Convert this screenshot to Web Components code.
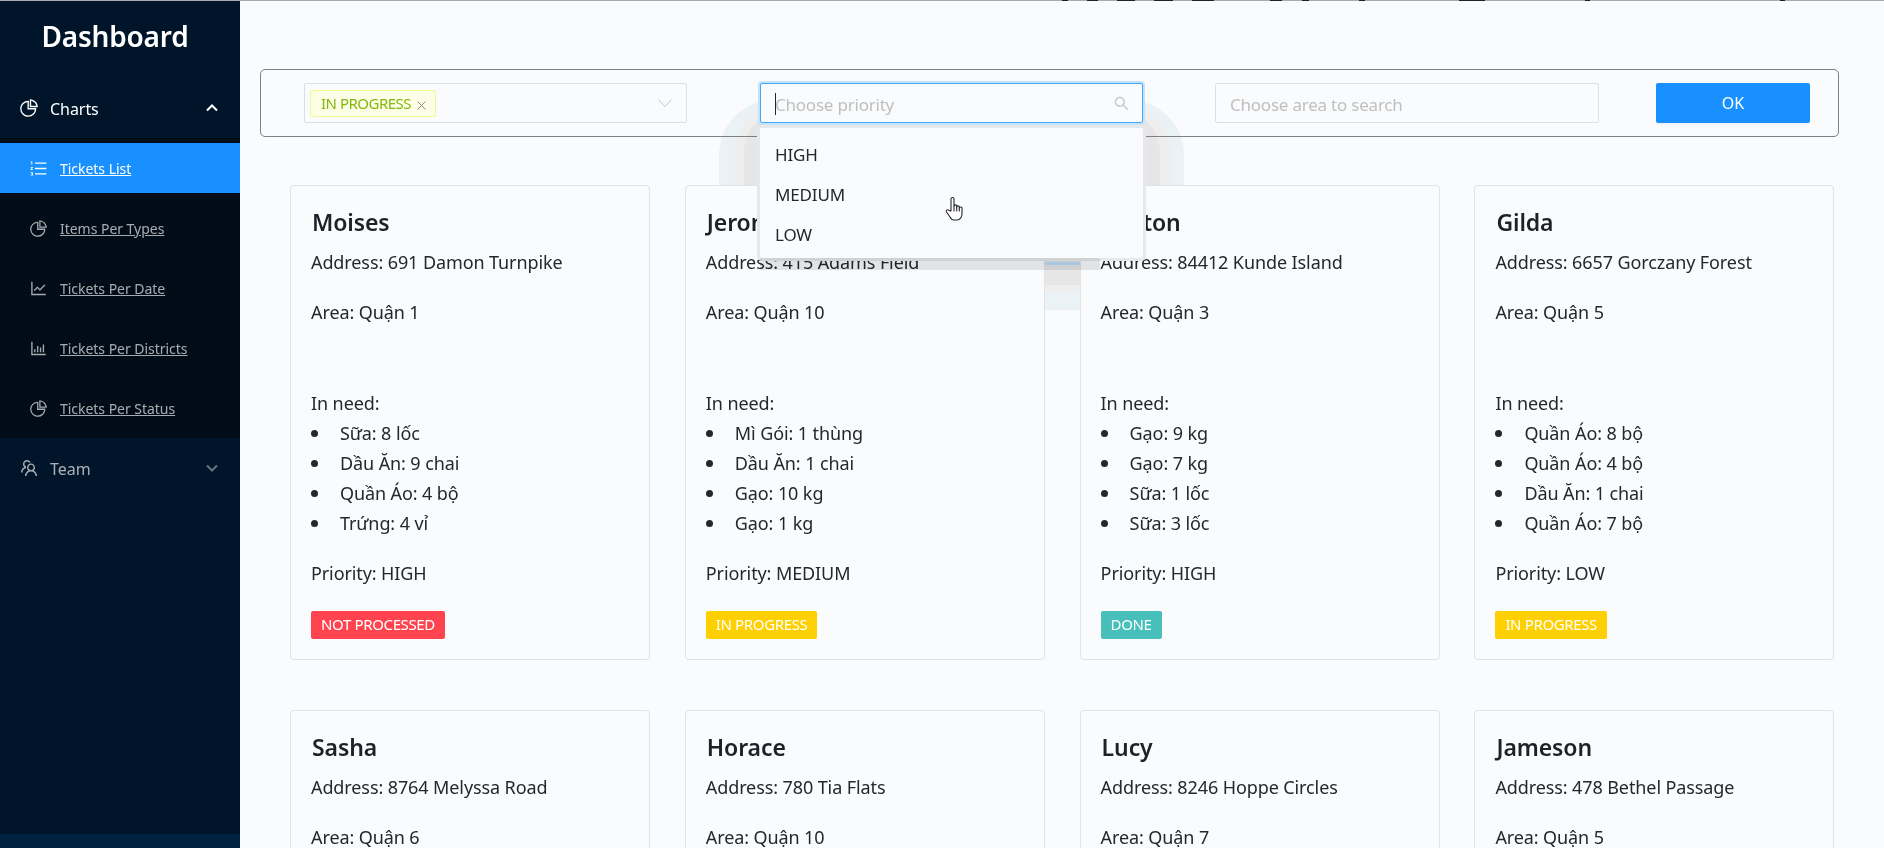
<!DOCTYPE html>
<html lang="vi">
<head>
<meta charset="utf-8">
<title>Dashboard</title>
<style>
  html, body { margin: 0; height: 100%; overflow: hidden; background: #fafbfd; }
  body { font-family: "Noto Sans", "Open Sans", sans-serif; color: #23272e; }
</style>
</head>
<body>
<app-shell>
  <side-nav slot="nav" heading="Dashboard">
    <nav-group label="Charts" icon="pie" open>
      <nav-item label="Tickets List" icon="list" active></nav-item>
      <nav-item label="Items Per Types" icon="pie"></nav-item>
      <nav-item label="Tickets Per Date" icon="line"></nav-item>
      <nav-item label="Tickets Per Districts" icon="bar"></nav-item>
      <nav-item label="Tickets Per Status" icon="pie"></nav-item>
    </nav-group>
    <nav-group label="Team" icon="team"></nav-group>
  </side-nav>

  <filter-bar>
    <tag-select value="IN PROGRESS"></tag-select>
    <search-select placeholder="Choose priority" options="HIGH|MEDIUM|LOW" open></search-select>
    <search-select placeholder="Choose area to search" wide></search-select>
    <ok-button>OK</ok-button>
  </filter-bar>

  <ticket-grid>
    <ticket-card name="Moises" address="691 Damon Turnpike" area="Quận 1" items="Sữa: 8 lốc|Dầu Ăn: 9 chai|Quần Áo: 4 bộ|Trứng: 4 vỉ" priority="HIGH" status="NOT PROCESSED"></ticket-card>
    <ticket-card name="Jerome" address="415 Adams Field" area="Quận 10" items="Mì Gói: 1 thùng|Dầu Ăn: 1 chai|Gạo: 10 kg|Gạo: 1 kg" priority="MEDIUM" status="IN PROGRESS"></ticket-card>
    <ticket-card name="Ashton" address="84412 Kunde Island" area="Quận 3" items="Gạo: 9 kg|Gạo: 7 kg|Sữa: 1 lốc|Sữa: 3 lốc" priority="HIGH" status="DONE"></ticket-card>
    <ticket-card name="Gilda" address="6657 Gorczany Forest" area="Quận 5" items="Quần Áo: 8 bộ|Quần Áo: 4 bộ|Dầu Ăn: 1 chai|Quần Áo: 7 bộ" priority="LOW" status="IN PROGRESS"></ticket-card>
    <ticket-card name="Sasha" address="8764 Melyssa Road" area="Quận 6"></ticket-card>
    <ticket-card name="Horace" address="780 Tia Flats" area="Quận 10"></ticket-card>
    <ticket-card name="Lucy" address="8246 Hoppe Circles" area="Quận 7"></ticket-card>
    <ticket-card name="Jameson" address="478 Bethel Passage" area="Quận 5"></ticket-card>
  </ticket-grid>

  <hand-cursor slot="overlay"></hand-cursor>
</app-shell>

<script>
const ICONS = {
  pie: 'M864 518H506V160c0-4.4-3.6-8-8-8h-26a398.46 398.46 0 0 0-282.8 117.1 398.19 398.19 0 0 0-85.7 127.1A397.61 397.61 0 0 0 72 552a398.46 398.46 0 0 0 117.1 282.8c36.7 36.7 79.5 65.6 127.1 85.7A397.61 397.61 0 0 0 472 952a398.46 398.46 0 0 0 282.8-117.1c36.7-36.7 65.6-79.5 85.7-127.1A397.61 397.61 0 0 0 872 552v-26c0-4.4-3.6-8-8-8zM705.7 787.8A331.59 331.59 0 0 1 470.4 884c-88.1-.4-170.9-34.9-233.2-97.2C174.5 724.1 140 640.7 140 552c0-88.7 34.5-172.1 97.2-234.8 54.6-54.6 124.9-87.9 200.8-95.5V586h364.3c-7.7 76.3-41.3 147-96.6 201.8zM952 462.4l-2.6-28.2c-8.5-92.1-49.4-179-115.2-244.6A399.4 399.4 0 0 0 589 74.6L560.7 72c-4.7-.4-8.7 3.2-8.7 7.9V464c0 4.4 3.6 8 8 8l384-1c4.7 0 8.4-4 8-8.6zm-332.2-58.2V147.6a332.24 332.24 0 0 1 166.4 89.8c45.7 45.6 77 103.6 90 166.1l-256.4.7z',
  list: 'M920 760H336c-4.4 0-8 3.6-8 8v56c0 4.4 3.6 8 8 8h584c4.4 0 8-3.6 8-8v-56c0-4.4-3.6-8-8-8zm0-568H336c-4.4 0-8 3.6-8 8v56c0 4.4 3.6 8 8 8h584c4.4 0 8-3.6 8-8v-56c0-4.4-3.6-8-8-8zm0 284H336c-4.4 0-8 3.6-8 8v56c0 4.4 3.6 8 8 8h584c4.4 0 8-3.6 8-8v-56c0-4.4-3.6-8-8-8zM216 712H100c-2.2 0-4 1.8-4 4v34c0 2.2 1.8 4 4 4h72.4v20.5h-35.7c-2.2 0-4 1.8-4 4v34c0 2.2 1.8 4 4 4h35.7V838H100c-2.2 0-4 1.8-4 4v34c0 2.2 1.8 4 4 4h116c2.2 0 4-1.8 4-4V716c0-2.2-1.8-4-4-4zM100 188h38v120c0 2.2 1.8 4 4 4h40c2.2 0 4-1.8 4-4V152c0-4.4-3.6-8-8-8h-78c-2.2 0-4 1.8-4 4v36c0 2.2 1.8 4 4 4zm116 240H100c-2.2 0-4 1.8-4 4v36c0 2.2 1.8 4 4 4h68.4l-70.3 77.7a8.3 8.3 0 0 0-2.1 5.4V592c0 2.2 1.8 4 4 4h116c2.2 0 4-1.8 4-4v-36c0-2.2-1.8-4-4-4h-68.4l70.3-77.7a8.3 8.3 0 0 0 2.1-5.4V432c0-2.2-1.8-4-4-4z',
  line: 'M888 792H200V168c0-4.4-3.6-8-8-8h-56c-4.4 0-8 3.6-8 8v688c0 4.4 3.6 8 8 8h752c4.4 0 8-3.6 8-8v-56c0-4.4-3.6-8-8-8zM305.8 637.7c3.1 3.1 8.1 3.1 11.3 0l138.3-137.6L583 628.5c3.1 3.1 8.2 3.1 11.3 0l275.4-275.3c3.1-3.1 3.1-8.2 0-11.3l-39.6-39.6a8.03 8.03 0 0 0-11.3 0l-230 229.9L461.4 404a8.03 8.03 0 0 0-11.3 0L266.3 586.7a8.03 8.03 0 0 0 0 11.3l39.5 39.7z',
  bar: 'M888 792H200V168c0-4.4-3.6-8-8-8h-56c-4.4 0-8 3.6-8 8v688c0 4.4 3.6 8 8 8h752c4.4 0 8-3.6 8-8v-56c0-4.4-3.6-8-8-8zm-600-80h56c4.4 0 8-3.6 8-8V560c0-4.4-3.6-8-8-8h-56c-4.4 0-8 3.6-8 8v144c0 4.4 3.6 8 8 8zm152 0h56c4.4 0 8-3.6 8-8V384c0-4.4-3.6-8-8-8h-56c-4.4 0-8 3.6-8 8v320c0 4.4 3.6 8 8 8zm152 0h56c4.4 0 8-3.6 8-8V462c0-4.4-3.6-8-8-8h-56c-4.4 0-8 3.6-8 8v242c0 4.4 3.6 8 8 8zm152 0h56c4.4 0 8-3.6 8-8V304c0-4.4-3.6-8-8-8h-56c-4.4 0-8 3.6-8 8v400c0 4.4 3.6 8 8 8z',
  team: 'M824.2 699.9a301.55 301.55 0 0 0-86.4-60.4C783.1 602.8 812 546.8 812 484c0-110.8-92.4-201.7-203.2-200-109.1 1.7-197 90.6-197 200 0 62.8 29 118.8 74.2 155.5a300.95 300.95 0 0 0-86.4 60.4C345 754.6 314 826.8 312 903.8a8 8 0 0 0 8 8.2h56c4.3 0 7.9-3.4 8-7.7 1.9-58 25.4-112.3 66.7-153.5A226.62 226.62 0 0 1 612 684c60.9 0 118.2 23.7 161.3 66.8C814.5 792 838 846.3 840 904.3c.1 4.3 3.7 7.7 8 7.7h56a8 8 0 0 0 8-8.2c-2-77-33-149.2-87.8-203.9zM612 612c-34.2 0-66.4-13.3-90.5-37.5a126.86 126.86 0 0 1-37.5-91.8c.3-32.8 13.4-64.5 36.3-88 24-24.6 56.1-38.3 90.4-38.7 33.9-.3 66.8 12.9 91 36.6 24.8 24.3 38.4 56.8 38.4 91.4 0 34.2-13.3 66.3-37.5 90.5A127.3 127.3 0 0 1 612 612zM361.5 510.4c-.9-8.7-1.4-17.5-1.4-26.4 0-15.9 1.5-31.4 4.3-46.5.7-3.6-1.2-7.3-4.5-8.8-13.6-6.1-26.1-14.5-36.9-25.1a127.54 127.54 0 0 1-38.7-95.4c.9-32.1 13.8-62.6 36.3-85.6 24.7-25.3 57.9-39.1 93.2-38.7 31.9.3 62.7 12.6 86 34.4 7.9 7.4 14.7 15.6 20.4 24.4 2 3.1 5.9 4.4 9.3 3.2 17.6-6.1 36.2-10.4 55.3-12.4 5.6-.6 8.8-6.6 6.3-11.6-32.5-64.3-98.9-108.7-175.7-109.9-110.9-1.7-203.3 89.2-203.3 199.9 0 62.8 28.9 118.8 74.2 155.5-31.8 14.7-61.1 35-86.5 60.4-54.8 54.7-85.8 126.9-87.8 204a8 8 0 0 0 8 8.2h56.1c4.3 0 7.9-3.4 8-7.7 1.9-58 25.4-112.3 66.7-153.5 29.4-29.4 65.4-49.8 104.7-59.7 3.9-1 6.5-4.7 6-8.7z',
  search: 'M909.6 854.5L649.9 594.8C690.2 542.7 712 479 712 412c0-80.2-31.3-155.4-87.9-212.1-56.6-56.7-132-87.9-212.1-87.9s-155.5 31.3-212.1 87.9C143.2 256.5 112 331.8 112 412c0 80.1 31.3 155.5 87.9 212.1C256.5 680.8 331.8 712 412 712c67 0 130.6-21.8 182.7-62l259.7 259.6a8.2 8.2 0 0 0 11.6 0l43.6-43.5a8.2 8.2 0 0 0 0-11.6zM570.4 570.4C528 612.7 471.8 636 412 636s-116-23.3-158.4-65.6C211.3 528 188 471.8 188 412s23.3-116.1 65.6-158.4C296 211.3 352.2 188 412 188s116.1 23.2 158.4 65.6S636 352.2 636 412s-23.3 116.1-65.6 158.4z'
};

const icon = (name, size) =>
  `<svg width="${ size }" height="${ size }" viewBox="64 64 896 896" fill="currentColor" aria-hidden="true"><path d="${ ICONS[name] }"/></svg>`;

const STATUS_COLORS = {
  'NOT PROCESSED': '#ff444f',
  'IN PROGRESS': '#ffd000',
  'DONE': '#47bfbb'
};

class AppShell extends HTMLElement {
  connectedCallback() {
    const shadow = this.attachShadow({ mode: 'open' });
    shadow.innerHTML = `
      <style>
        :host { display: flex; height: 100vh; position: relative; overflow: hidden; }
        .topline {
          position: absolute; top: 0; left: 0; right: 0; height: 1px; z-index: 9;
          background: linear-gradient(90deg,
            #aaa 1062px, #222 1062px 1068px, #aaa 1068px 1087px, #222 1087px 1098px, #aaa 1098px 1117px,
            #222 1117px 1135px, #aaa 1135px 1154px, #222 1154px 1173px, #aaa 1173px 1192px, #222 1192px 1214px,
            #aaa 1214px 1270px, #222 1270px 1282px, #aaa 1282px 1302px, #222 1302px 1309px, #aaa 1309px 1359px,
            #222 1359px 1365px, #aaa 1365px 1459px, #222 1459px 1485px, #aaa 1485px 1585px, #222 1585px 1590px,
            #aaa 1590px 1780px, #222 1780px 1785px, #aaa 1785px);
        }
        main { flex: 1; min-width: 0; position: relative; padding: 69px 45px 0 20px; }
        /* ghost of the page's loader, it sits behind the cards */
        .ghost {
          position: absolute; left: 479px; top: 100px; width: 465px; height: 210px; box-sizing: border-box;
          background: #eaf2f6; border-radius: 55px 55px 0 0;
        }
        .ghost::before {
          content: ''; position: absolute; inset: 5px 14px 17px 16px;
          background: #eeeeee; border-radius: 48px 48px 0 0;
        }
        .ghost::after {
          content: ''; position: absolute; inset: 10px 24px 25px 25px;
          background: #e6e6e6; border-radius: 42px 42px 0 0;
        }
        .blue {
          position: absolute; left: 519px; top: 153px; width: 385px; height: 112px; box-sizing: border-box;
          border: 1px solid #bcdcf7; border-width: 1px 1px 3px; z-index: 0;
        }
        .content { position: relative; z-index: 1; }
        /* the same ghost, left over on top of the cards under the dropdown */
        .strip {
          position: absolute; left: 760px; top: 258px; width: 340px; height: 12px; z-index: 3;
          background: #e6e7e8; mix-blend-mode: multiply; pointer-events: none;
        }
      </style>
      <div class="topline"></div>
      <slot name="nav"></slot>
      <main>
        <div class="ghost"></div>
        <div class="blue"></div>
        <div class="content"><slot></slot></div>
      </main>
      <div class="strip"></div>
      <slot name="overlay"></slot>
    `;
  }
}

class SideNav extends HTMLElement {
  connectedCallback() {
    const shadow = this.attachShadow({ mode: 'open' });
    shadow.innerHTML = `
      <style>
        :host { display: flex; flex-direction: column; flex: 0 0 240px; width: 240px; background: #001529; }
        h1 {
          margin: 0 0 6px; height: 72px; line-height: 72px; padding-right: 10px; text-align: center;
          color: #fff; font-size: 28px; font-weight: 600; letter-spacing: -.2px;
        }
        .menu { flex: 1; }
        .trigger { height: 14px; background: #002140; }
      </style>
      <h1>${ this.getAttribute('heading') }</h1>
      <div class="menu"><slot></slot></div>
      <div class="trigger"></div>
    `;
  }
}

class NavGroup extends HTMLElement {
  connectedCallback() {
    const open = this.hasAttribute('open');
    const shadow = this.attachShadow({ mode: 'open' });
    shadow.innerHTML = `
      <style>
        :host { display: block; }
        .title {
          display: flex; align-items: center; height: 50px; margin: 5px 0; padding: 0 22px 0 20px;
          font-size: 16px; letter-spacing: -.05px; color: ${ open ? '#fff' : 'rgba(255,255,255,.65)' };
        }
        .title svg:first-child { margin-right: 12px; flex: none; }
        .label { flex: 1; padding-top: 1px; }
        .chev { color: ${ open ? '#fff' : 'rgba(255,255,255,.4)' }; flex: none; }
        .sub { background: #000c17; padding: 5px 0; }
      </style>
      <div class="title">
        ${ icon(this.getAttribute('icon'), 18) }
        <span class="label">${ this.getAttribute('label') }</span>
        <svg class="chev" width="12" height="8" viewBox="0 0 12 8" fill="none" stroke="currentColor" stroke-width="2">
          <path d="${ open ? 'M1 6.5 6 1.5l5 5' : 'M1 1.5l5 5 5-5' }"/>
        </svg>
      </div>
      ${ open ? '<div class="sub"><slot></slot></div>' : '' }
    `;
  }
}

class NavItem extends HTMLElement {
  connectedCallback() {
    const active = this.hasAttribute('active');
    const shadow = this.attachShadow({ mode: 'open' });
    shadow.innerHTML = `
      <style>
        :host {
          display: flex; align-items: center; height: 50px; padding-left: 30px;
          background: ${ active ? '#1890ff' : 'transparent' };
          color: ${ active ? '#fff' : 'rgba(255,255,255,.65)' };
          font-size: 14px; letter-spacing: -.03px;
        }
        :host(:not(:last-child)) { margin-bottom: 10px; }
        svg { margin-right: 13px; flex: none; }
        a { color: inherit; text-decoration: underline; }
      </style>
      ${ icon(this.getAttribute('icon'), 17) }
      <a href="#">${ this.getAttribute('label') }</a>
    `;
  }
}

class FilterBar extends HTMLElement {
  connectedCallback() {
    const shadow = this.attachShadow({ mode: 'open' });
    shadow.innerHTML = `
      <style>
        :host {
          display: grid; grid-template-columns: 456px 455px 441px 154px; align-items: start;
          height: 68px; box-sizing: border-box; padding: 13px 0 13px 43px;
          border: 1px solid #808080; border-radius: 5px;
          position: relative; z-index: 2;
        }
      </style>
      <slot></slot>
    `;
  }
}

class TagSelect extends HTMLElement {
  connectedCallback() {
    const shadow = this.attachShadow({ mode: 'open' });
    shadow.innerHTML = `
      <style>
        :host {
          display: flex; align-items: center; justify-content: space-between;
          width: 383px; height: 40px; box-sizing: border-box; padding: 0 14px 0 5px;
          border: 1px solid #d9dfe7; border-radius: 2px; background: #fafbfd;
        }
        .tag {
          display: flex; align-items: center; height: 27px; box-sizing: border-box; padding: 0 9px 0 10px;
          background: #fcffe6; border: 1px solid #eef98f; border-radius: 2px;
          color: #85b80f; font-size: 15px; letter-spacing: -.5px;
        }
        .tag svg { margin: 5px 0 0 6px; }
      </style>
      <span class="tag">${ this.getAttribute('value') }
        <svg width="9" height="9" viewBox="0 0 9 9" fill="none" stroke="#8c8c8c" stroke-width="1"><path d="M.5.5l8 8M8.5.5l-8 8"/></svg>
      </span>
      <svg width="14" height="8" viewBox="0 0 14 8" fill="none" stroke="#c4c8cc" stroke-width="1"><path d="M.5.5 7 7.5 13.5.5"/></svg>
    `;
  }
}

class SearchSelect extends HTMLElement {
  connectedCallback() {
    const open = this.hasAttribute('open');
    const options = (this.getAttribute('options') || '').split('|').filter(Boolean);
    const shadow = this.attachShadow({ mode: 'open' });
    shadow.innerHTML = `
      <style>
        :host { display: block; position: relative; width: ${ this.hasAttribute('wide') ? 384 : 383 }px; }
        .box {
          display: flex; align-items: center; height: 40px; box-sizing: border-box; padding: 0 13px 0 14px;
          background: #fafbfd; border-radius: 2px; position: relative;
          border: 1px solid ${ open ? '#40a9ff' : '#dcdfe4' };
          ${ open ? 'box-shadow: 0 0 0 2px #c5e3fb;' : '' }
          color: #bfbfbf; font-size: 17px; letter-spacing: -.22px;
        }
        .box span { flex: 1; padding-top: 2px; }
        .box i { position: absolute; left: 14px; top: 9px; width: 1px; height: 22px; background: #23272e; }
        .box svg { color: #c4c4c4; flex: none; }
        ul {
          position: absolute; left: 0; right: 0; top: 45px; height: 130px; box-sizing: border-box;
          margin: 0; padding: 7px 0 3px; list-style: none; background: #fafbfd; border-radius: 2px;
          box-shadow: 0 0 0 3px #e6e9ec; z-index: 2;
        }
        li { height: 40px; line-height: 40px; padding-left: 15px; font-size: 17px; letter-spacing: -.16px; color: #23272e; }
      </style>
      <div class="box">
        ${ open ? '<i></i>' : '' }
        <span>${ this.getAttribute('placeholder') }</span>
        ${ open ? icon('search', 15) : '' }
      </div>
      ${ open ? `<ul>${ options.map((o) => `<li>${ o }</li>`).join('') }</ul>` : '' }
    `;
  }
}

class OkButton extends HTMLElement {
  connectedCallback() {
    const shadow = this.attachShadow({ mode: 'open' });
    shadow.innerHTML = `
      <style>
        :host {
          display: flex; align-items: center; justify-content: center;
          width: 154px; height: 40px; background: #1890ff; border-radius: 2px; color: #fff; font-size: 16px;
          box-shadow: 0 2px 0 rgba(0,0,0,.03);
        }
      </style>
      <slot></slot>
    `;
  }
}

class TicketGrid extends HTMLElement {
  connectedCallback() {
    const shadow = this.attachShadow({ mode: 'open' });
    shadow.innerHTML = `
      <style>
        :host {
          display: grid; grid-template-columns: repeat(4, 360px); column-gap: 34.8px; row-gap: 50px;
          padding: 48px 0 0 30px;
        }
      </style>
      <slot></slot>
    `;
  }
}

class TicketCard extends HTMLElement {
  get items() {
    return (this.getAttribute('items') || '').split('|').filter(Boolean);
  }

  connectedCallback() {
    const shadow = this.attachShadow({ mode: 'open' });
    const status = this.getAttribute('status');
    shadow.innerHTML = `
      <style>
        :host {
          display: block; box-sizing: border-box; height: 475px; padding: 20px;
          background: #fafbfd; border: 1px solid #dfe2e6; border-radius: 4px;
          font-size: 18px; letter-spacing: -.1px; color: #23272e;
        }
        h3 { margin: 0 0 9px; padding: 0 0 0 1px; font-size: 23px; line-height: 32px; font-weight: 600; color: #1e2127; letter-spacing: -.1px; }
        p { margin: 0; line-height: 30px; }
        .area { margin: 20px 0 61px; }
        ul { margin: 0 0 20px; padding: 0; list-style: none; }
        li { display: flex; height: 30px; line-height: 30px; }
        li::before {
          content: ''; flex: none; width: 7px; height: 7px; margin: 12px 22px 0 0;
          border-radius: 50%; background: #23272e;
        }
        .status {
          display: inline-block; height: 28px; line-height: 27px; margin-top: 23px; padding: 0 10px; border-radius: 2px;
          color: #fff; font-size: 15px; letter-spacing: -.36px; background: ${ STATUS_COLORS[status] };
        }
      </style>
      <h3>${ this.getAttribute('name') }</h3>
      <p>Address: ${ this.getAttribute('address') }</p>
      <p class="area">Area: ${ this.getAttribute('area') }</p>
      ${ status ? `
        <p>In need:</p>
        <ul>${ this.items.map((item) => `<li>${ item }</li>`).join('') }</ul>
        <p>Priority: ${ this.getAttribute('priority') }</p>
        <span class="status">${ status }</span>
      ` : '' }
    `;
  }
}

class HandCursor extends HTMLElement {
  connectedCallback() {
    const shadow = this.attachShadow({ mode: 'open' });
    shadow.innerHTML = `
      <style>
        :host { position: absolute; left: 945px; top: 196px; width: 20px; height: 26px; z-index: 10; pointer-events: none; }
      </style>
      <svg width="20" height="26" viewBox="0 0 20 26" fill="#fff" stroke="#23272e" stroke-width="1.1" stroke-linejoin="round" stroke-linecap="round">
        <path d="M6 15V3c0-2 3-2 3 0v7c0-1.5 2.7-1.5 2.7 0v1c0-1.5 2.6-1.5 2.6 0v1c0-1.4 2.7-1.4 2.7 0v6c0 3-2 6-5 6H9c-2 0-3-1-4-3l-3.500-5c-1-1.500.8-3 2.200-1.800z"/>
        <path d="M9 10v5M11.700 11v4M14.300 12v3"/>
      </svg>
    `;
  }
}

customElements.define('app-shell', AppShell);
customElements.define('side-nav', SideNav);
customElements.define('nav-group', NavGroup);
customElements.define('nav-item', NavItem);
customElements.define('filter-bar', FilterBar);
customElements.define('tag-select', TagSelect);
customElements.define('search-select', SearchSelect);
customElements.define('ok-button', OkButton);
customElements.define('ticket-grid', TicketGrid);
customElements.define('ticket-card', TicketCard);
customElements.define('hand-cursor', HandCursor);
</script>
</body>
</html>
